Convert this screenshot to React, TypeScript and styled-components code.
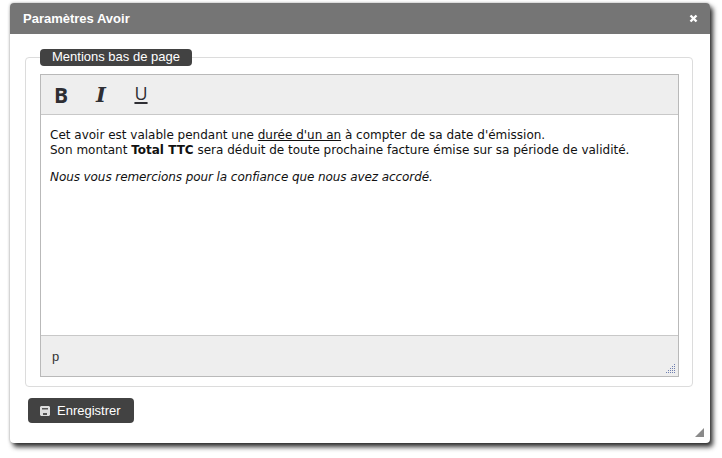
import * as React from "react";
import styled, { createGlobalStyle } from "styled-components";

const GlobalStyle = createGlobalStyle`
  html, body {
    margin: 0;
    padding: 0;
    background: #fff;
  }
`;

const Page = styled.div`
  width: 722px;
  height: 458px;
  box-sizing: border-box;
  padding: 3px 12px 15px 10px;
  overflow: hidden;
  font-family: "Liberation Sans", Arial, sans-serif;
`;

const Dialog = styled.div`
  position: relative;
  height: 440px;
  display: flex;
  flex-direction: column;
  background: #fff;
  border-radius: 4px;
  box-shadow: 3px 4px 5px rgba(0, 0, 0, 0.8), 0 0 3px rgba(0, 0, 0, 0.3);
`;

const TitleBar = styled.header`
  height: 31px;
  flex: none;
  display: flex;
  align-items: center;
  justify-content: space-between;
  padding: 0 12px 0 13px;
  background: #757575;
  border-radius: 4px 4px 0 0;
  color: #fff;
  font-size: 13px;
  font-weight: 700;
`;

const CloseIcon = styled.svg`
  width: 9px;
  height: 9px;
  display: block;
`;

const Content = styled.div`
  flex: 1;
  display: flex;
  flex-direction: column;
  align-items: flex-start;
  padding: 15px 17px 0 15px;
`;

const Fieldset = styled.fieldset`
  align-self: stretch;
  margin: 0;
  padding: 8px 13px 8px 14px;
  height: 338px;
  box-sizing: border-box;
  border: 1px solid #dcdcdc;
  border-radius: 4px;
`;

const Legend = styled.legend`
  margin: 0;
  padding: 0 12px 1px;
  height: 17px;
  line-height: 16px;
  box-sizing: border-box;
  width: 152px;
  background: #424242;
  border-radius: 4px;
  color: #fff;
  font-size: 13px;
  white-space: nowrap;
`;

const Editor = styled.div`
  height: 303px;
  box-sizing: border-box;
  display: flex;
  flex-direction: column;
  border: 1px solid #b9b9b9;
`;

const Toolbar = styled.div`
  height: 39px;
  flex: none;
  display: flex;
  align-items: center;
  gap: 26px;
  padding-left: 13px;
  background: #eee;
  border-bottom: 1px solid #c8c8c8;
`;

const ToolButton = styled.span<{ $kind: "bold" | "italic" | "underline" }>`
  width: 14px;
  text-align: center;
  color: #2e2e33;
  line-height: 24px;
  font-family: ${(p) => (p.$kind === "italic" ? '"DejaVu Serif", serif' : '"Open Sans", sans-serif')};
  font-size: ${(p) => (p.$kind === "underline" ? "18px" : "21px")};
  font-weight: ${(p) => (p.$kind === "underline" ? 500 : 700)};
  font-style: ${(p) => (p.$kind === "italic" ? "italic" : "normal")};
  text-decoration: ${(p) => (p.$kind === "underline" ? "underline" : "none")};
  text-decoration-thickness: 2px;
  text-underline-offset: 2px;
  padding-bottom: ${(p) => (p.$kind === "underline" ? "3px" : "0")};
`;

const EditArea = styled.div`
  flex: 1;
  padding: 13px 9px 0;
  font-family: "DejaVu Sans", Verdana, sans-serif;
  font-size: 12px;
  line-height: 15px;
  color: #111;
  background: #fff;
`;

const Paragraph = styled.p`
  margin: 0 0 12px;
`;

const Thanks = styled.em`
  letter-spacing: -0.08px;
`;

const StatusBar = styled.div`
  position: relative;
  height: 40px;
  flex: none;
  display: flex;
  align-items: center;
  padding-left: 11px;
  background: #eee;
  border-top: 1px solid #c8c8c8;
  font-size: 13px;
  color: #333;
`;

const Grip = styled.svg`
  position: absolute;
  right: 2px;
  bottom: 2px;
  width: 11px;
  height: 11px;
`;

const SaveButton = styled.button`
  margin: 11px 0 0 3px;
  width: 106px;
  height: 25px;
  padding: 0 0 1px 12px;
  display: flex;
  align-items: center;
  gap: 7px;
  border: 0;
  border-radius: 4px;
  background: #424242;
  color: #fff;
  font-family: "Liberation Sans", Arial, sans-serif;
  font-size: 13px;
`;

const SaveIcon = styled.svg`
  width: 10px;
  height: 10px;
  flex: none;
  margin-top: 1px;
`;

const ResizeHandle = styled.svg`
  position: absolute;
  right: 6px;
  bottom: 6px;
  width: 9px;
  height: 9px;
`;

export default function App() {
  return (
    <Page>
      <GlobalStyle />
      <Dialog>
        <TitleBar>
          Paramètres Avoir
          <CloseIcon viewBox="0 0 9 9">
            <path d="M1.5 1.5 7.5 7.5M7.5 1.5 1.5 7.5" stroke="#fff" strokeWidth="2.4" />
          </CloseIcon>
        </TitleBar>
        <Content>
          <Fieldset>
            <Legend>Mentions bas de page</Legend>
            <Editor>
              <Toolbar>
                <ToolButton $kind="bold">B</ToolButton>
                <ToolButton $kind="italic">I</ToolButton>
                <ToolButton $kind="underline">U</ToolButton>
              </Toolbar>
              <EditArea>
                <Paragraph>
                  Cet avoir est valable pendant une <u>durée d'un an</u> à compter de sa date d'émission.
                  <br />
                  Son montant <strong>Total TTC</strong> sera déduit de toute prochaine facture émise sur sa période de validité.
                </Paragraph>
                <Paragraph>
                  <Thanks>Nous vous remercions pour la confiance que nous avez accordé.</Thanks>
                </Paragraph>
              </EditArea>
              <StatusBar>
                p
                <Grip viewBox="0 0 11 11">
                  <path
                    d="M9 1h1v1H9zM9 3h1v1H9zM7 3h1v1H7zM9 5h1v1H9zM7 5h1v1H7zM5 5h1v1H5zM9 7h1v1H9zM7 7h1v1H7zM5 7h1v1H5zM3 7h1v1H3zM9 9h1v1H9zM7 9h1v1H7zM5 9h1v1H5zM3 9h1v1H3zM1 9h1v1H1z"
                    fill="#6f7fb0"
                  />
                </Grip>
              </StatusBar>
            </Editor>
          </Fieldset>
          <SaveButton>
            <SaveIcon viewBox="0 0 10 10">
              <path d="M1 0h8l1 1v8l-1 1H1L0 9V1z" fill="#ddd" />
              <path d="M2 2h6v1.5H2zM3 7h4v2H3z" fill="#555" />
            </SaveIcon>
            Enregistrer
          </SaveButton>
        </Content>
        <ResizeHandle viewBox="0 0 9 9">
          <path d="M9 0v9H0z" fill="#8a8a8a" />
        </ResizeHandle>
      </Dialog>
    </Page>
  );
}
